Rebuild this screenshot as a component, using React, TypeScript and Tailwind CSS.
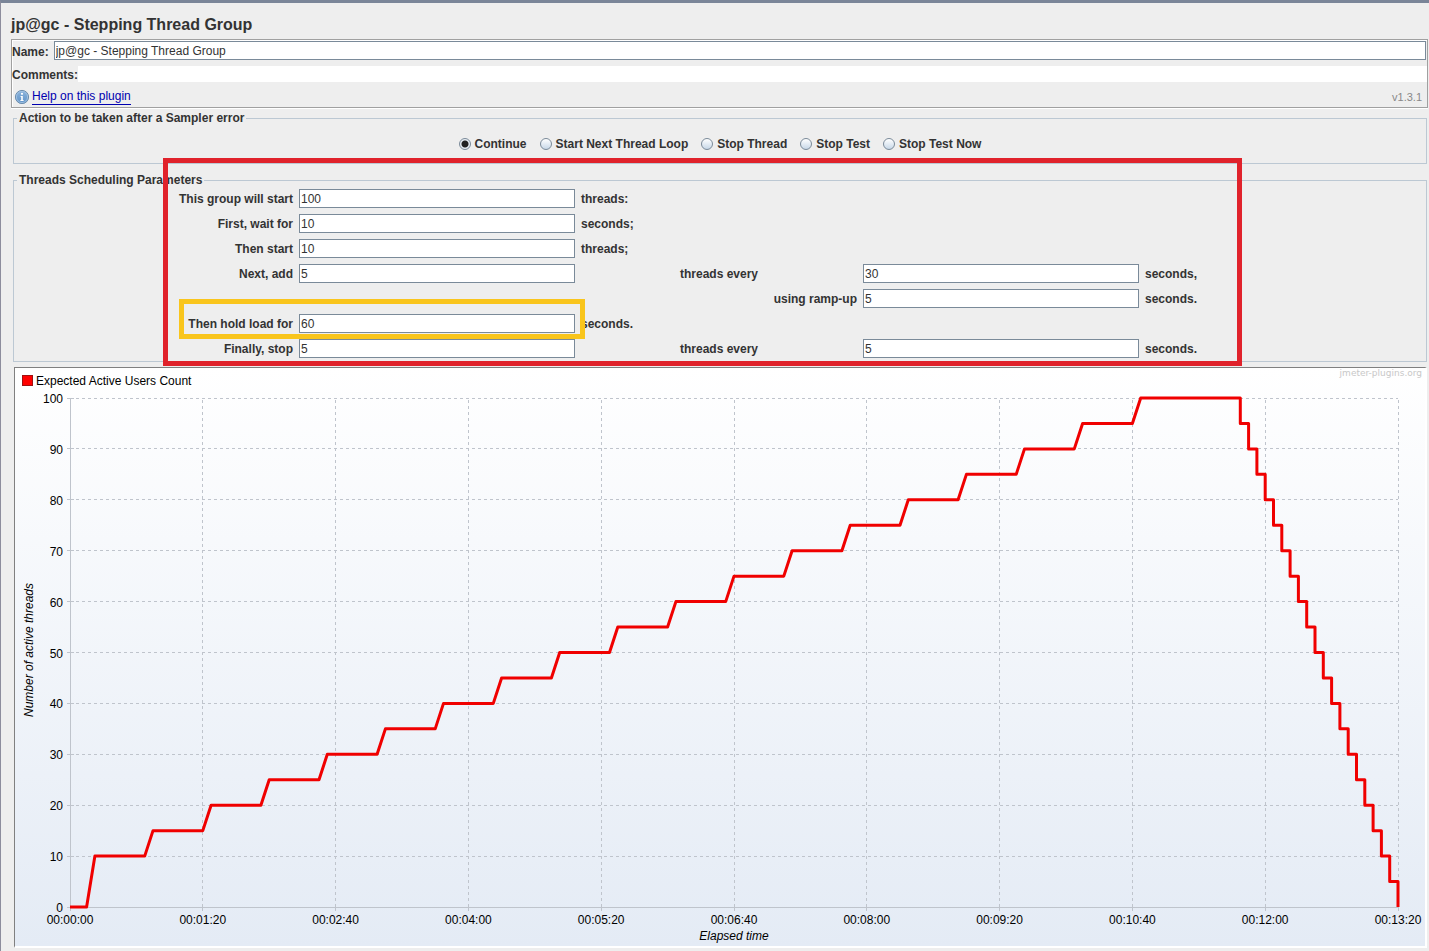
const errorActions = [
  "Continue",
  "Start Next Thread Loop",
  "Stop Thread",
  "Stop Test",
  "Stop Test Now",
];

const field =
  "h-[19px] w-full min-w-0 border border-[#7a8a99] bg-white pl-px text-xs font-normal text-[#333333] outline-none";

// Plot area inside the chart's view box
const LEFT = 55;
const BOTTOM = 539;
const PLOT_WIDTH = 1328;
const PLOT_HEIGHT = 509;
const DURATION = 800;

const px = (seconds: number) => LEFT + (seconds / DURATION) * PLOT_WIDTH;
const py = (threads: number) => BOTTOM - (threads / 100) * PLOT_HEIGHT;

const formatTime = (seconds: number) => {
  const minutes = String(Math.floor(seconds / 60)).padStart(2, "0");
  const rest = String(seconds % 60).padStart(2, "0");
  return `00:${minutes}:${rest}`;
};

function schedule() {
  const points: [number, number][] = [[0, 0], [10, 0], [15, 10]];
  let time = 15;
  let threads = 10;
  while (threads < 100) {
    points.push([time + 30, threads]);
    time += 35;
    threads += 5;
    points.push([time, threads]);
  }
  time += 60;
  while (threads > 0) {
    points.push([time, threads]);
    threads -= 5;
    points.push([time, threads]);
    time += 5;
  }
  return points;
}

function InfoIcon() {
  return (
    <svg viewBox="0 0 16 16" className="size-4" aria-hidden="true">
      <defs>
        <linearGradient id="info" x1="0" y1="0" x2="0" y2="1">
          <stop offset="0" stopColor="#8db4dc" />
          <stop offset="1" stopColor="#5f93c8" />
        </linearGradient>
      </defs>
      <circle cx="8" cy="8" r="6.6" fill="url(#info)" stroke="#6f8fae" />
      <circle cx="8" cy="8" r="5.6" fill="none" stroke="#a8c6e4" strokeWidth="0.8" />
      <circle cx="8" cy="4.8" r="1.1" fill="#fff" />
      <path d="M6.6 7h2.2v4h.8v1H6.4v-1h.8V8h-.6z" fill="#fff" />
    </svg>
  );
}

function Chart() {
  const line = schedule()
    .map(([t, n]) => `${px(t)},${py(n)}`)
    .join(" ");
  const xTicks = Array.from({ length: 11 }, (_, i) => i * 80);
  const yTicks = Array.from({ length: 11 }, (_, i) => i * 10);

  return (
    <svg viewBox="0 0 1410 578" className="block h-auto w-full" role="img" aria-label="Expected Active Users Count">
      <defs>
        <linearGradient id="sky" x1="0" y1="0" x2="0" y2="1">
          <stop offset="0" stopColor="#ffffff" />
          <stop offset="1" stopColor="#e4ebf5" />
        </linearGradient>
      </defs>
      <rect width="1410" height="578" fill="url(#sky)" />

      {/* Legend */}
      <rect x="7.5" y="7.5" width="10" height="10" fill="#ff0000" stroke="#a01010" />
      <text x="21" y="17" fontSize="12">Expected Active Users Count</text>
      <text x="1407" y="8" fontSize="9" textAnchor="end" fill="#c8c8c8" fontFamily="DejaVu Sans, sans-serif">
        jmeter-plugins.org
      </text>

      {/* Grid */}
      <g stroke="#bfc4cc" shapeRendering="crispEdges">
        {yTicks.map((n) => (
          <g key={n}>
            <path d={`M${LEFT - 3} ${py(n)}h7`} />
            {n > 0 && <path d={`M${LEFT} ${py(n)}h${PLOT_WIDTH}`} strokeDasharray="3 3" />}
          </g>
        ))}
        {xTicks.map((t) => (
          <g key={t}>
            <path d={`M${px(t)} ${BOTTOM - 3}v7`} />
            {t > 0 && <path d={`M${px(t)} ${BOTTOM}v${-PLOT_HEIGHT}`} strokeDasharray="3 3" />}
          </g>
        ))}
        <path d={`M${LEFT} ${BOTTOM - PLOT_HEIGHT}V${BOTTOM}h${PLOT_WIDTH}`} fill="none" />
      </g>

      {/* Axis labels */}
      <g fontSize="12">
        {yTicks.map((n) => (
          <text key={n} x="48" y={py(n) + 5} textAnchor="end">{n}</text>
        ))}
        {xTicks.map((t) => (
          <text key={t} x={px(t)} y="556" textAnchor="middle">{formatTime(t)}</text>
        ))}
        <text x="719" y="572" textAnchor="middle" fontStyle="italic">Elapsed time</text>
        <text transform="translate(18 282) rotate(-90)" textAnchor="middle" fontStyle="italic">
          Number of active threads
        </text>
      </g>

      <polyline points={line} fill="none" stroke="#f00000" strokeWidth="3" strokeLinejoin="round" />
    </svg>
  );
}

export default function App() {
  return (
    <div className="min-h-screen border-t-[3px] border-l border-t-[#7a8598] border-l-[#8d8d9d] bg-[#eeeeee] pr-px pl-[10px] font-['Liberation_Sans',Arial,sans-serif] text-xs font-bold text-[#333333]">
      <h1 className="pt-[10px] pb-[2px] text-base">jp@gc - Stepping Thread Group</h1>

      <div className="border border-[#a0a0a0] shadow-[inset_1px_1px_0_#ffffff,0_1px_0_#ffffff]">
        <div className="flex items-center gap-[5px] pt-px pr-px">
          <label htmlFor="name" className="w-[37px] pt-[2px]">Name:</label>
          <input id="name" className={field} defaultValue="jp@gc - Stepping Thread Group" />
        </div>
        <div className="flex items-center pt-[6px]">
          <label htmlFor="comments" className="h-4 w-[66px] leading-[18px]">Comments:</label>
          <input id="comments" className="h-4 min-w-0 flex-1 bg-white font-normal outline-none" />
        </div>
        <div className="flex items-center justify-between pt-[7px] pr-[5px] pb-[2px] pl-[2px] font-normal">
          <div className="flex items-center gap-[2px]">
            <InfoIcon />
            <a href="#help" className="border-b border-[#0000b0] leading-[15px] text-[#0000b0]">Help on this plugin</a>
          </div>
          <span className="text-[11px] text-[#888888]">v1.3.1</span>
        </div>
      </div>

      <fieldset className="mt-[2px] ml-[2px] mr-px h-[54px] border border-[#bcc8d3] pt-[10px]">
        <legend className="ml-[3px] px-[2px]">Action to be taken after a Sampler error</legend>
        <div className="flex justify-center gap-[13px]">
          {errorActions.map((action, i) => (
            <label key={action} className="flex items-center gap-1">
              <input
                type="radio"
                name="on-error"
                defaultChecked={i === 0}
                className="size-3 appearance-none rounded-full border border-[#7a8a99] bg-linear-to-b from-white to-[#c8d8e8] checked:bg-[radial-gradient(circle,#222222_3px,#e8eef4_4px)]"
              />
              {action}
            </label>
          ))}
        </div>
      </fieldset>

      <div className="relative mt-2 mr-px ml-[2px]">
        <fieldset className="border border-[#bcc8d3] pt-px pb-[3px]">
          <legend className="ml-[3px] px-[2px]">Threads Scheduling Parameters</legend>
          <div className="grid auto-rows-[19px] grid-cols-5 items-center gap-[6px] pr-[5px] pl-[3px]">
            <label htmlFor="total" className="text-right">This group will start</label>
            <input id="total" className={field} defaultValue="100" />
            <span className="col-span-3">threads:</span>

            <label htmlFor="delay" className="text-right">First, wait for</label>
            <input id="delay" className={field} defaultValue="10" />
            <span className="col-span-3">seconds;</span>

            <label htmlFor="burst" className="text-right">Then start</label>
            <input id="burst" className={field} defaultValue="10" />
            <span className="col-span-3">threads;</span>

            <label htmlFor="add" className="text-right">Next, add</label>
            <input id="add" className={field} defaultValue="5" />
            <label htmlFor="add-every" className="text-center">threads every</label>
            <input id="add-every" className={field} defaultValue="30" />
            <span>seconds,</span>

            <label htmlFor="ramp-up" className="col-start-3 text-right">using ramp-up</label>
            <input id="ramp-up" className={field} defaultValue="5" />
            <span>seconds.</span>

            <div className="relative col-span-2 grid grid-cols-2 items-center gap-[6px]">
              <label htmlFor="hold" className="text-right">Then hold load for</label>
              <input id="hold" className={field} defaultValue="60" />
              <div className="pointer-events-none absolute -top-[15px] -right-[10px] -bottom-[6px] left-[162px] border-[5px] border-[#f9c51c]" />
            </div>
            <span className="col-span-3">seconds.</span>

            <label htmlFor="stop" className="text-right">Finally, stop</label>
            <input id="stop" className={field} defaultValue="5" />
            <label htmlFor="stop-every" className="text-center">threads every</label>
            <input id="stop-every" className={field} defaultValue="5" />
            <span>seconds.</span>
          </div>
        </fieldset>
        <div className="pointer-events-none absolute -top-[14px] right-[185px] -bottom-[4px] left-[150px] z-10 border-[5px] border-[#e0222b]" />
      </div>

      <div className="mt-[5px] mr-px ml-[3px] border-t border-r-2 border-b-2 border-l border-t-[#808080] border-r-white border-b-white border-l-[#808080] font-normal">
        <Chart />
      </div>
    </div>
  );
}
